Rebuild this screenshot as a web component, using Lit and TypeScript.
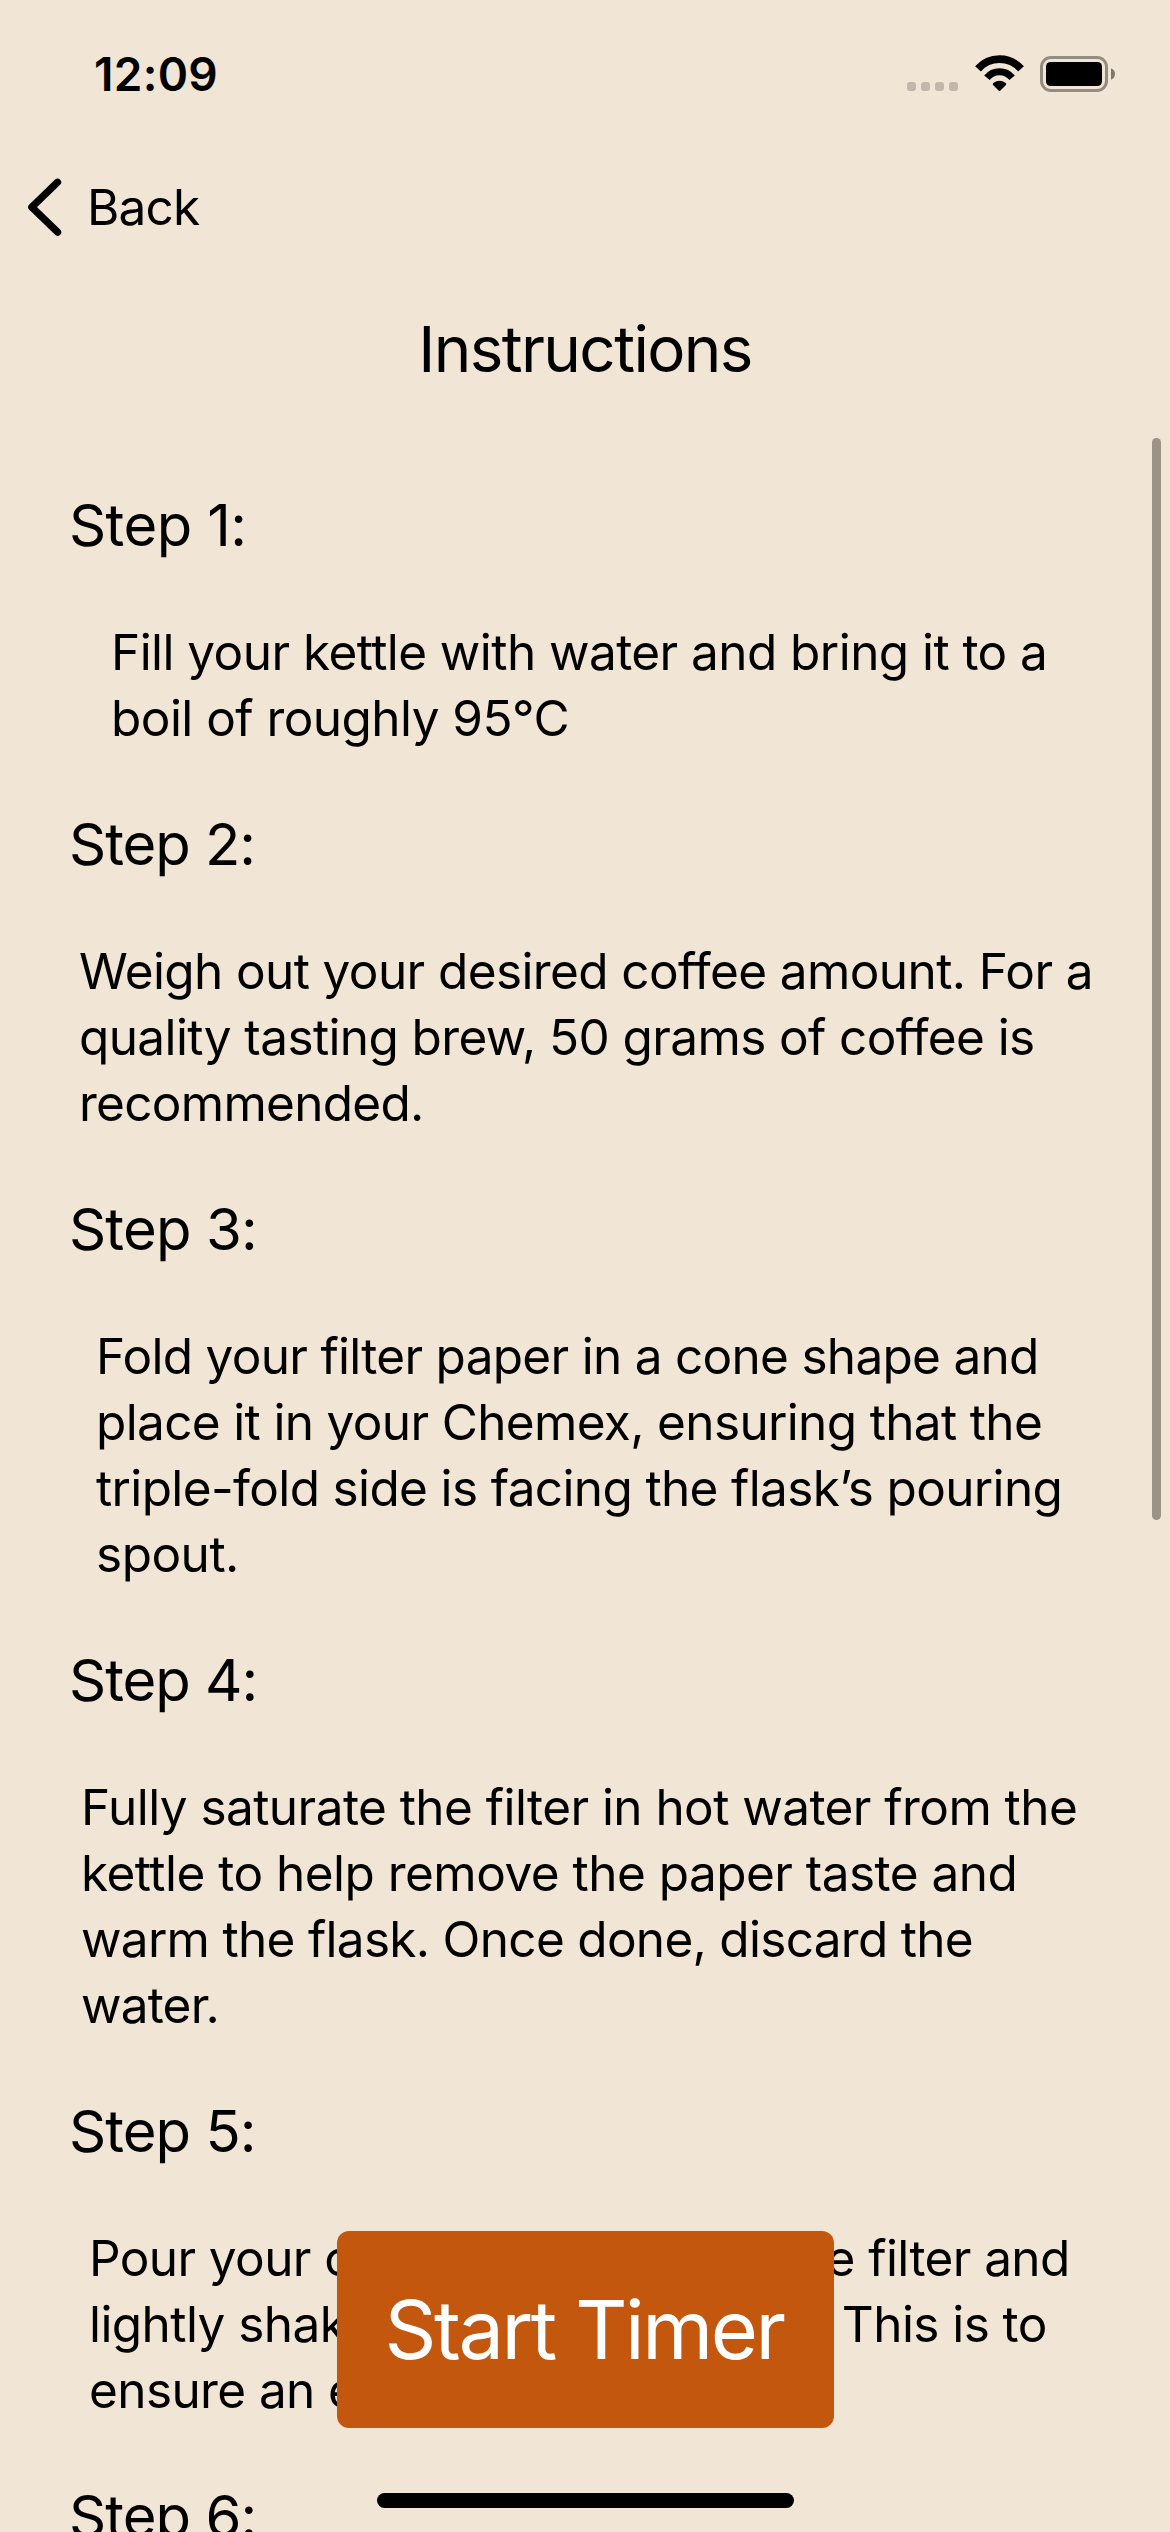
import { LitElement, html, css } from "lit";
import { customElement } from "lit/decorators.js";
import { styleMap } from "lit/directives/style-map.js";

interface Line {
  text: string;
  tracking: number;
}

interface Step {
  indent: number;
  titleTracking: number;
  lines: Line[];
}

const STEPS: Step[] = [
  {
    indent: 111,
    titleTracking: -0.6,
    lines: [
      { text: "Fill your kettle with water and bring it to a", tracking: -0.557 },
      { text: "boil of roughly 95°C", tracking: -0.55 },
    ],
  },
  {
    indent: 79,
    titleTracking: -1.05,
    lines: [
      { text: "Weigh out your desired coffee amount. For a", tracking: -0.61 },
      { text: "quality tasting brew, 50 grams of coffee is", tracking: -0.61 },
      { text: "recommended.", tracking: -0.72 },
    ],
  },
  {
    indent: 96,
    titleTracking: -0.85,
    lines: [
      { text: "Fold your filter paper in a cone shape and", tracking: -0.71 },
      { text: "place it in your Chemex, ensuring that the", tracking: -0.65 },
      { text: "triple-fold side is facing the flask’s pouring", tracking: -0.64 },
      { text: "spout.", tracking: -0.5 },
    ],
  },
  {
    indent: 81,
    titleTracking: -1.05,
    lines: [
      { text: "Fully saturate the filter in hot water from the", tracking: -0.56 },
      { text: "kettle to help remove the paper taste and", tracking: -0.52 },
      { text: "warm the flask. Once done, discard the", tracking: -0.7 },
      { text: "water.", tracking: -0.8 },
    ],
  },
  {
    indent: 89,
    titleTracking: -0.95,
    lines: [
      { text: "Pour your coffee grounds into the filter and", tracking: -0.6 },
      { text: "lightly shake it to flatten the bed. This is to", tracking: -0.57 },
      { text: "ensure an even extraction.", tracking: -0.6 },
    ],
  },
  { indent: 80, titleTracking: -0.95, lines: [] },
];

@customElement("status-bar")
class StatusBar extends LitElement {
  static styles = css`
    :host {
      display: flex;
      justify-content: space-between;
      height: 141px;
      padding: 0 55px 0 94px;
      box-sizing: border-box;
    }
    .time {
      padding-top: 44px;
      font-size: 46px;
      line-height: 60px;
      font-weight: 600;
      letter-spacing: 0.3px;
    }
    .indicators {
      display: flex;
      align-items: flex-start;
      padding-top: 55px;
    }
    .signal {
      display: flex;
      gap: 5px;
      padding-top: 27px;
      margin-right: 17px;
    }
    .dot {
      width: 9px;
      height: 9px;
      border-radius: 3px;
      background: #c1b7aa;
    }
    .battery {
      margin: 1px 0 0 16px;
    }
    svg {
      display: block;
    }
  `;

  render() {
    return html`
      <div class="time">12:09</div>
      <div class="indicators">
        <div class="signal">
          <i class="dot"></i><i class="dot"></i><i class="dot"></i><i class="dot"></i>
        </div>
        <svg width="49" height="37" viewBox="0 0 49 37">
          <g fill="none" stroke="#000">
            <path d="M3 13.9A28.6 28.6 0 0 1 46 13.9" stroke-width="7.7" />
            <path d="M11.9 22.7A16.2 16.2 0 0 1 37.1 22.7" stroke-width="7" />
          </g>
          <path d="M18.1 29.9Q17.2 28.9 18.3 28Q24.5 23.4 30.7 28Q31.8 28.9 30.9 29.9L25.2 35.7Q24.5 36.4 23.8 35.7Z" />
        </svg>
        <svg class="battery" width="75" height="36" viewBox="0 0 75 36">
          <rect x="1.5" y="1.5" width="65" height="33" rx="9.5" fill="none" stroke="#938c81" stroke-width="3" />
          <rect x="6" y="6" width="56" height="24" rx="4.5" />
          <path d="M71 12.3Q75 14 75 18T71 23.7Z" fill="#7f786e" />
        </svg>
      </div>
    `;
  }
}

@customElement("brew-step")
class BrewStep extends LitElement {
  static properties = {
    number: { type: Number },
    step: { attribute: false },
  };
  declare number: number;
  declare step: Step;

  static styles = css`
    :host {
      display: flex;
      flex-direction: column;
      gap: 58px;
      flex: none;
    }
    .title {
      margin: 0;
      padding-left: 69px;
      font-size: 58px;
      font-weight: 400;
      line-height: 72px;
    }
    .body {
      margin: 0;
      font-size: 49.5px;
      line-height: 66px;
    }
    .line {
      display: block;
      white-space: nowrap;
    }
  `;

  render() {
    const { indent, titleTracking, lines } = this.step;
    return html`
      <h2 class="title" style=${styleMap({ letterSpacing: `${titleTracking}px` })}>Step ${this.number}:</h2>
      <p class="body" style=${styleMap({ paddingLeft: `${indent}px` })}>
        ${lines.map(
          (l) => html`<span class="line" style=${styleMap({ letterSpacing: `${l.tracking}px` })}>${l.text}</span>`
        )}
      </p>
    `;
  }
}

@customElement("app-root")
class AppRoot extends LitElement {
  static styles = css`
    :host {
      display: flex;
      flex-direction: column;
      position: relative;
      width: 1170px;
      height: 2532px;
      overflow: hidden;
      background: #f1e5d5;
      color: #000;
      font-family: Inter, "Liberation Sans", sans-serif;
    }
    .nav {
      display: flex;
      align-items: center;
      height: 66px;
      margin-top: 33px;
      padding-left: 27px;
      gap: 25px;
    }
    .back {
      font-size: 49.5px;
      line-height: 66px;
      letter-spacing: -0.8px;
    }
    .heading {
      margin: 70px 0 0;
      text-align: center;
      font-size: 63.7px;
      font-weight: 400;
      line-height: 78px;
      letter-spacing: -1.6px;
    }
    .scroll {
      display: flex;
      flex-direction: column;
      gap: 57px;
      flex: 1;
      min-height: 0;
      overflow: hidden;
      margin-top: 50px;
      padding-top: 51px;
    }
    .scrollbar {
      position: absolute;
      top: 438px;
      right: 9px;
      width: 9px;
      height: 1082px;
      border-radius: 5px;
      background: #9c9386;
    }
    .start {
      position: absolute;
      left: 337px;
      top: 2231px;
      width: 497px;
      height: 197px;
      padding: 0 3px 0 0;
      border: 0;
      border-radius: 12px;
      background: #c4570e;
      color: #fff;
      font-family: inherit;
      font-size: 81px;
      line-height: 100px;
      letter-spacing: -2.45px;
    }
    .home {
      position: absolute;
      left: 377px;
      bottom: 24px;
      width: 417px;
      height: 15px;
      border-radius: 8px;
      background: #000;
    }
  `;

  render() {
    return html`
      <status-bar></status-bar>
      <nav class="nav">
        <svg width="35" height="58" viewBox="0 0 35 58">
          <path d="M30.6 4.2L4.8 29.2L30.6 54.2" fill="none" stroke="#000" stroke-width="7.2" stroke-linecap="round" stroke-linejoin="round" />
        </svg>
        <span class="back">Back</span>
      </nav>
      <h1 class="heading">Instructions</h1>
      <main class="scroll">
        ${STEPS.map((s, i) => html`<brew-step .number=${i + 1} .step=${s}></brew-step>`)}
      </main>
      <div class="scrollbar"></div>
      <button class="start">Start Timer</button>
      <div class="home"></div>
    `;
  }
}
